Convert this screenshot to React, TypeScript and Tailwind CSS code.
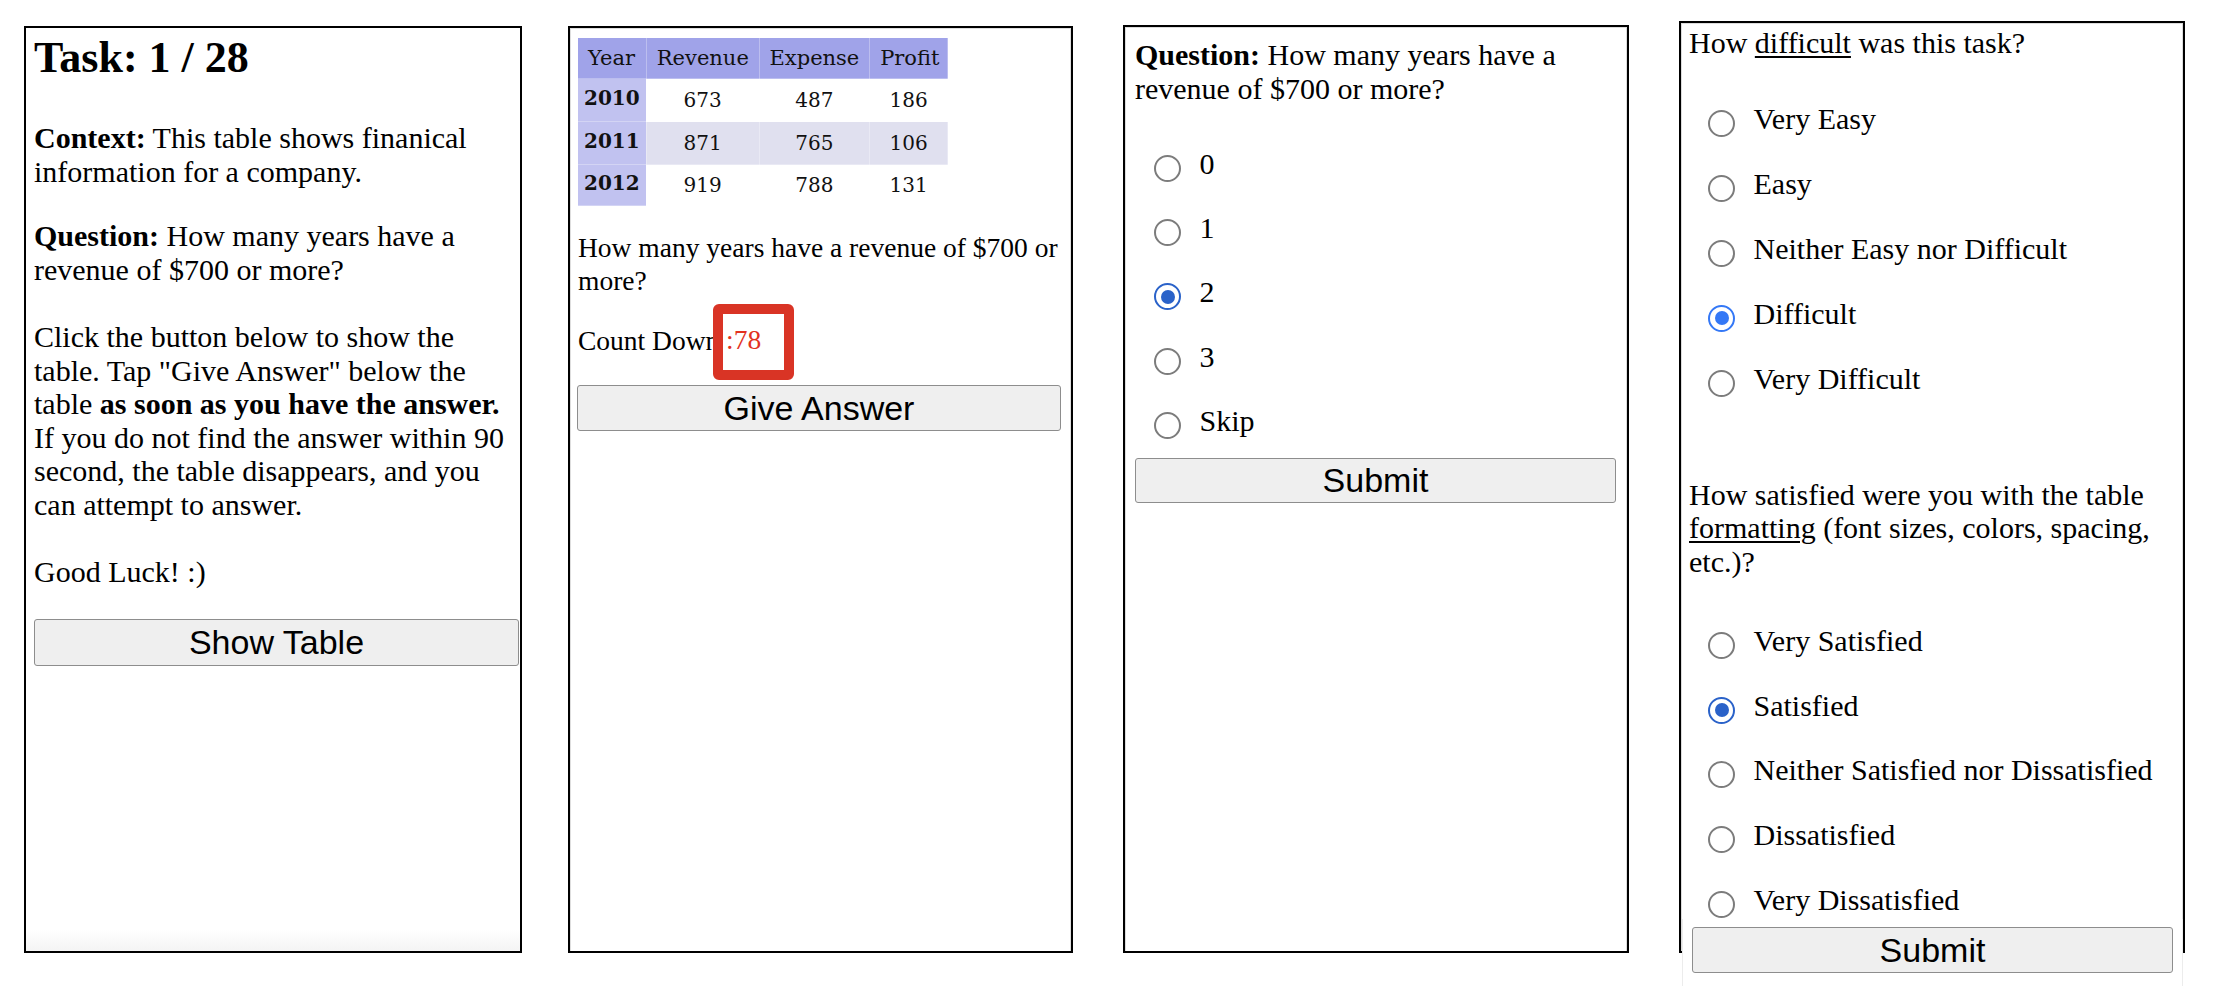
import React from "react";

function Radio({ checked, tone }: { checked?: boolean; tone?: "dark" | "bright" }) {
  if (checked && tone === "bright") {
    return (
      <span className="mt-[8px] flex h-[27px] w-[27px] shrink-0 items-center justify-center rounded-full border-[2.5px] border-[#3478f6] bg-white">
        <span className="h-[14px] w-[14px] rounded-full bg-[#3478f6]" />
      </span>
    );
  }
  if (checked) {
    return (
      <span className="mt-[8px] flex h-[27px] w-[27px] shrink-0 items-center justify-center rounded-full border-[2.5px] border-[#2a62c9] bg-white">
        <span className="h-[14px] w-[14px] rounded-full bg-[#2a62c9]" />
      </span>
    );
  }
  return <span className="mt-[8px] block h-[27px] w-[27px] shrink-0 rounded-full border-2 border-[#7c7c7c] bg-white" />;
}

function Option({ label, checked, tone }: { label: string; checked?: boolean; tone?: "dark" | "bright" }) {
  return (
    <div className="flex h-[35px] items-start">
      <span className="ml-[19px]">
        <Radio checked={checked} tone={tone} />
      </span>
      <span className="ml-[18.5px] whitespace-nowrap">{label}</span>
    </div>
  );
}

function GrayButton({ label, className }: { label: string; className: string }) {
  return (
    <div
      className={
        "flex items-center justify-center rounded-[3px] border border-[#8d8d8d] bg-[#efefef] font-['Liberation_Sans',Arial,sans-serif] text-[34px] leading-none text-black " +
        className
      }
    >
      {label}
    </div>
  );
}

const rows = [
  { y: "2010", r: "673", e: "487", p: "186", stripe: false, h: "h-[43px]" },
  { y: "2011", r: "871", e: "765", p: "106", stripe: true, h: "h-[43px]" },
  { y: "2012", r: "919", e: "788", p: "131", stripe: false, h: "h-[41px]" },
];

export default function App() {
  return (
    <div className="relative h-[996px] w-[2222px] overflow-hidden bg-white font-['Liberation_Serif','Times_New_Roman',serif] text-black">
      <div className="flex items-start">
        {/* Panel 1 */}
        <div className="ml-[24px] mt-[26px] flex h-[927px] w-[498px] shrink-0 flex-col border-2 border-black pl-[8px] pr-[1px] text-[30px] leading-[33.5px]">
          <h2 className="mt-[6px] text-[44px] font-bold leading-[48px]">Task: 1 / 28</h2>
          <p className="mt-[39px]">
            <b>Context:</b> <span>This table shows finanical information for a company.</span>
          </p>
          <p className="mt-[31px]">
            <b>Question:</b> <span>How many years have a revenue of $700 or more?</span>
          </p>
          <p className="mt-[34px]">
            Click the button below to show the table. Tap "Give Answer" below the table{" "}
            <b>as soon as you have the answer.</b> If you do not find the answer within 90 second, the table
            disappears, and you can attempt to answer.
          </p>
          <p className="mt-[34px]">Good Luck! :)</p>
          <GrayButton label="Show Table" className="mt-[30px] h-[47px] w-[485px]" />
          <div className="mt-auto -ml-[8px] -mr-[1px] h-[22px] bg-gradient-to-b from-white to-[#f4f4f4]" />
        </div>

        {/* Panel 2 */}
        <div className="ml-[46px] mt-[26px] h-[927px] w-[505px] shrink-0 border-2 border-black">
          <div className="flex h-full flex-col border-x border-t border-[#dedede] pl-[6px] pr-[9px] text-[27.5px] leading-[33px]">
            <table className="mt-[8px] w-[371px] border-collapse font-['DejaVu_Serif',Georgia,serif] text-[#111]">
              <thead>
                <tr className="h-[41px] bg-[#a0a3e9] text-left text-[21px] font-normal">
                  <th className="w-[69px] border border-white/30 pl-[10px] font-normal">Year</th>
                  <th className="w-[113px] border border-white/30 pl-[10px] font-normal">Revenue</th>
                  <th className="w-[111px] border border-white/30 pl-[10px] font-normal">Expense</th>
                  <th className="w-[78px] border border-white/30 pl-[10px] font-normal">Profit</th>
                </tr>
              </thead>
              <tbody className="text-[20px]">
                {rows.map((row) => (
                  <tr key={row.y} className={row.h + (row.stripe ? " bg-[#e0e0ef]" : " bg-white")}>
                    <td className="border border-white/30 bg-[#c1c2f0] pb-[4px] pl-[6px] text-left font-bold">{row.y}</td>
                    <td className="border border-white/30 text-center">{row.r}</td>
                    <td className="border border-white/30 text-center">{row.e}</td>
                    <td className="border border-white/30 text-center">{row.p}</td>
                  </tr>
                ))}
              </tbody>
            </table>
            <p className="mt-[25px] pl-[1px]">How many years have a revenue of $700 or more?</p>
            <div className="relative mt-[27px] pl-[1px]">
              <span>Count Down</span>
              <div className="absolute left-[136px] top-[-20px] h-[76px] w-[81px] rounded-[6px] border-[10px] border-[#d93425] bg-white pl-[3px] pt-[9px] text-[#e2321f]">
                :78
              </div>
            </div>
            <GrayButton label="Give Answer" className="mt-[28px] h-[46px] w-[484px]" />
          </div>
        </div>

        {/* Panel 3 */}
        <div className="ml-[50px] mt-[25px] h-[928px] w-[506px] shrink-0 border-2 border-black">
          <div className="flex h-full flex-col border-x border-t border-[#dcdcdc] pl-[9px] pr-[11px] text-[30px] leading-[33.5px]">
            <p className="mt-[10px]">
              <b>Question:</b> <span>How many years have a revenue of $700 or more?</span>
            </p>
            <div className="mt-[42px] flex flex-col gap-[29.2px]">
              <Option label="0" />
              <Option label="1" />
              <Option label="2" checked tone="dark" />
              <Option label="3" />
              <Option label="Skip" />
            </div>
            <GrayButton label="Submit" className="mt-[19px] h-[45px] w-[481px]" />
          </div>
        </div>

        {/* Panel 4 */}
        <div className="relative ml-[50px] mt-[21px] h-[932px] w-[506px] shrink-0 border-2 border-black">
          <div className="flex h-full flex-col border-x border-t border-[#dcdcdc] pl-[7px] pr-[6px] text-[30px] leading-[33.5px]">
            <p className="mt-[2.4px]">
              How <span className="underline decoration-[1.5px] underline-offset-[3px]">difficult</span> was this task?
            </p>
            <div className="mt-[42px] flex flex-col gap-[30px]">
              <Option label="Very Easy" />
              <Option label="Easy" />
              <Option label="Neither Easy nor Difficult" />
              <Option label="Difficult" checked tone="bright" />
              <Option label="Very Difficult" />
            </div>
            <p className="mt-[81px]">
              How satisfied were you with the table{" "}
              <span className="underline decoration-[1.5px] underline-offset-[3px]">formatting</span> (font sizes,
              colors, spacing, etc.)?
            </p>
            <div className="mt-[45.5px] flex flex-col gap-[29.8px]">
              <Option label="Very Satisfied" />
              <Option label="Satisfied" checked tone="dark" />
              <Option label="Neither Satisfied nor Dissatisfied" />
              <Option label="Dissatisfied" />
              <Option label="Very Dissatisfied" />
            </div>
          </div>
          <div className="absolute left-[1px] top-[895.7px] h-[67.3px] w-[501px] border-x border-[#ececec] bg-white pl-[9px] pt-[8px]">
            <GrayButton label="Submit" className="h-[46px] w-[481px]" />
          </div>
        </div>
      </div>
    </div>
  );
}
